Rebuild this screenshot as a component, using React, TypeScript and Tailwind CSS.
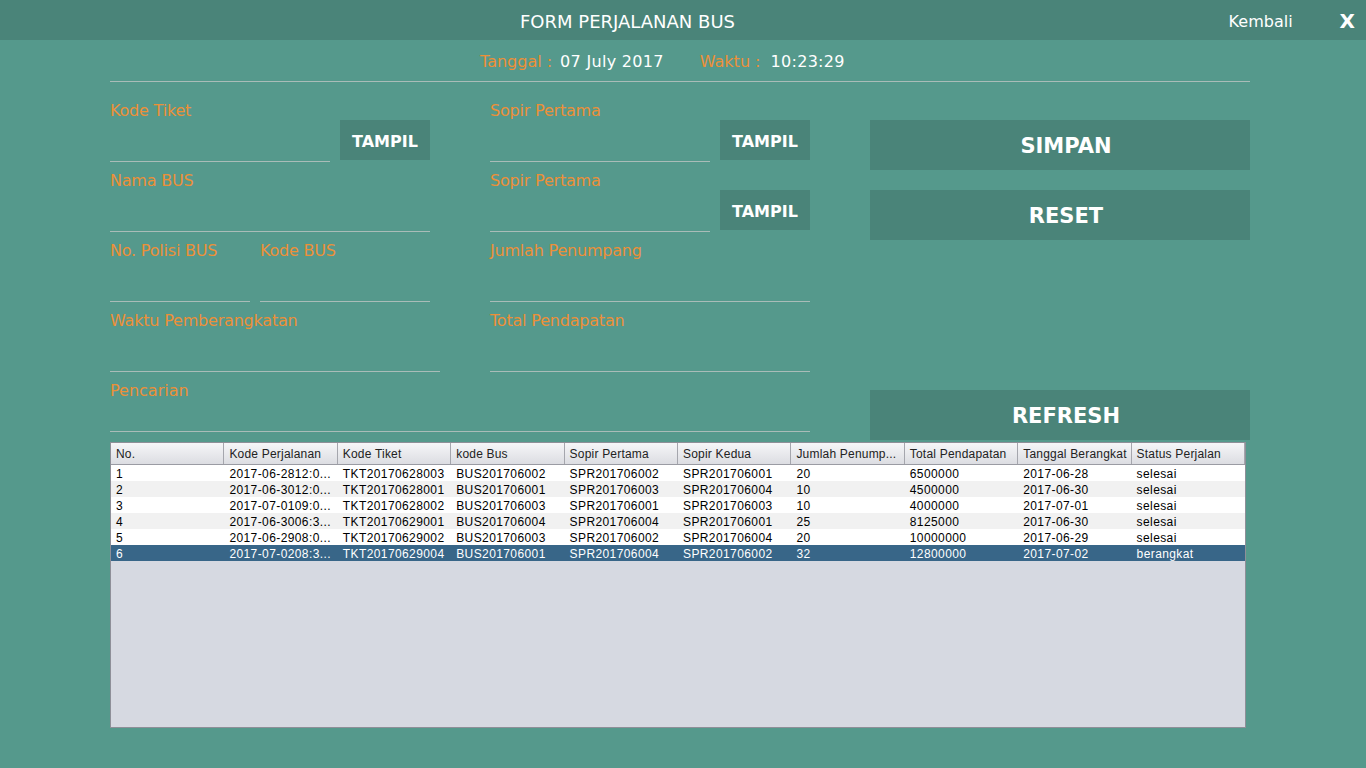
const rows = [
  ["1", "2017-06-2812:0...", "TKT20170628003", "BUS201706002", "SPR201706002", "SPR201706001", "20", "6500000", "2017-06-28", "selesai"],
  ["2", "2017-06-3012:0...", "TKT20170628001", "BUS201706001", "SPR201706003", "SPR201706004", "10", "4500000", "2017-06-30", "selesai"],
  ["3", "2017-07-0109:0...", "TKT20170628002", "BUS201706003", "SPR201706001", "SPR201706003", "10", "4000000", "2017-07-01", "selesai"],
  ["4", "2017-06-3006:3...", "TKT20170629001", "BUS201706004", "SPR201706004", "SPR201706001", "25", "8125000", "2017-06-30", "selesai"],
  ["5", "2017-06-2908:0...", "TKT20170629002", "BUS201706003", "SPR201706002", "SPR201706004", "20", "10000000", "2017-06-29", "selesai"],
  ["6", "2017-07-0208:3...", "TKT20170629004", "BUS201706001", "SPR201706004", "SPR201706002", "32", "12800000", "2017-07-02", "berangkat"],
];

const headers = [
  "No.",
  "Kode Perjalanan",
  "Kode Tiket",
  "kode Bus",
  "Sopir Pertama",
  "Sopir Kedua",
  "Jumlah Penump...",
  "Total Pendapatan",
  "Tanggal Berangkat",
  "Status Perjalan",
];

function Field({ label, width }: { label: string; width: string }) {
  return (
    <div className={`flex h-[70px] flex-col border-b border-[#a9bcb8] ${width}`}>
      <span className="pt-[9px] text-[16px] leading-5 tracking-[-0.2px] text-[#ec9038]">{label}</span>
    </div>
  );
}

function TampilRow({ label }: { label: string }) {
  return (
    <div className="flex items-end">
      <Field label={label} width="w-[220px]" />
      <button className="mb-[2px] ml-[10px] flex h-10 w-[90px] items-center justify-center bg-[#4a8479] pt-[3px] text-[16px] font-bold text-white">
        TAMPIL
      </button>
    </div>
  );
}

export default function App() {
  return (
    <div
      className="h-[768px] w-[1366px] overflow-hidden bg-[#55998c]"
      style={{ fontFamily: '"DejaVu Sans", sans-serif' }}
    >
      {/* Header */}
      <div className="flex h-10 items-center bg-[#4a8479] text-white">
        <span className="ml-[520px] pt-[2px] text-[18px]">FORM PERJALANAN BUS</span>
        <span className="ml-auto pt-[3px] text-[16px]">Kembali</span>
        <span className="ml-[47px] mr-[11px] pt-[2px] text-[20px] font-bold">X</span>
      </div>

      {/* Date line */}
      <div className="flex h-[41px] items-center pl-[480px] pt-[2px] text-[16px]">
        <span className="text-[#ec9038]">Tanggal :</span>
        <span className="ml-[8px] tracking-[0.3px] text-white">07 July 2017</span>
        <span className="ml-[36px] text-[#ec9038]">Waktu :</span>
        <span className="ml-[10px] tracking-[0.3px] text-white">10:23:29</span>
      </div>
      <div className="ml-[110px] w-[1140px] border-t border-[#a9bcb8]" />

      {/* Form */}
      <div className="ml-[110px] mt-[10px] flex w-[1140px]">
        <div className="w-[700px]">
          <div className="flex gap-[50px]">
            <div className="w-[330px]">
              <TampilRow label="Kode Tiket" />
              <Field label="Nama BUS" width="w-[320px]" />
              <div className="flex gap-[10px]">
                <Field label="No. Polisi BUS" width="w-[140px]" />
                <Field label="Kode BUS" width="w-[170px]" />
              </div>
              <Field label="Waktu Pemberangkatan" width="w-[330px]" />
            </div>
            <div className="w-[320px]">
              <TampilRow label="Sopir Pertama" />
              <TampilRow label="Sopir Pertama" />
              <Field label="Jumlah Penumpang" width="w-[320px]" />
              <Field label="Total Pendapatan" width="w-[320px]" />
            </div>
          </div>
          <div className="h-[60px] w-[700px] border-b border-[#a9bcb8]">
            <span className="block pt-[9px] text-[16px] leading-5 text-[#ec9038]">Pencarian</span>
          </div>
        </div>
        <div className="ml-[60px] flex w-[380px] flex-col text-[21px] font-bold text-white">
          <button className="mt-[28px] h-[50px] bg-[#4a8479] pl-[12px] pt-[4px]">SIMPAN</button>
          <button className="mt-5 h-[50px] bg-[#4a8479] pl-[12px] pt-[4px]">RESET</button>
          <button className="mt-[150px] h-[50px] bg-[#4a8479] pl-[12px] pt-[4px]">REFRESH</button>
        </div>
      </div>

      {/* Table */}
      <div
        className="ml-[110px] mt-[2px] h-[286px] w-[1136px] border border-[#8e8f98] bg-[#d6d9e1] text-[12px] text-black"
        style={{ fontFamily: '"Liberation Sans", Arial, sans-serif' }}
      >
        <div className="grid h-[22px] grid-cols-10 border-b border-[#9a9ba3] bg-gradient-to-b from-[#f6f6f8] to-[#dcdde2]">
          {headers.map((h) => (
            <div key={h} className="flex items-center truncate border-r border-[#a5a6ad] pl-[5px] tracking-[0.2px] text-[#222]">
              {h}
            </div>
          ))}
        </div>
        {rows.map((r, i) => (
          <div
            key={r[0]}
            className={`grid h-4 grid-cols-10 ${
              i === 5 ? "bg-[#386688] text-white" : i % 2 === 0 ? "bg-white" : "bg-[#f1f1f1]"
            }`}
          >
            {r.map((c, j) => (
              <div key={j} className="flex items-center truncate pl-[5px] pt-[1px] tracking-[0.4px]">
                {c}
              </div>
            ))}
          </div>
        ))}
      </div>
    </div>
  );
}
